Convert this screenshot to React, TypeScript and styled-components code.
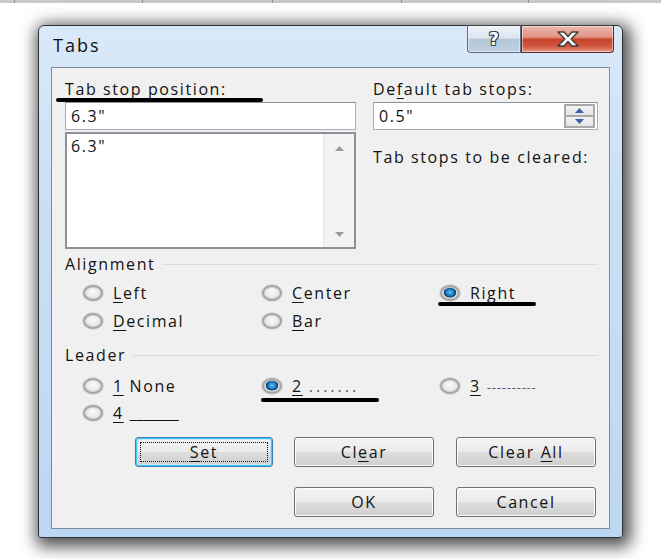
import React from "react";
import styled, { createGlobalStyle } from "styled-components";

const GlobalStyle = createGlobalStyle`
  html, body { margin: 0; padding: 0; background: #ffffff; }
  body { font-family: "Open Sans", "Noto Sans", "DejaVu Sans", sans-serif; color: #121212; }
  * { box-sizing: border-box; }
`;

const Page = styled.div`
  width: 661px;
  height: 559px;
  overflow: hidden;
  display: flex;
  flex-direction: column;
  background: #ffffff;
`;

const TopStrip = styled.div`
  height: 3px;
  display: flex;
  background: #c9c9cd;
`;

const StripSeg = styled.div<{ $w: number }>`
  width: ${(p) => p.$w}px;
  height: 100%;
  border-right: 1px solid #8d8d92;
`;

const Stage = styled.div`
  flex: 1;
  padding: 22px 0 0 38px;
`;

const Window = styled.div`
  position: relative;
  width: 585px;
  height: 513px;
  border: 1px solid #2c3035;
  border-radius: 6px 6px 3px 3px;
  background: linear-gradient(180deg, #d9e9f9 0%, #cadff5 35%, #bcd7f3 100%);
  box-shadow: 3px 4px 16px 5px rgba(0, 0, 0, 0.68);
  display: flex;
  flex-direction: column;
`;

const TitleBar = styled.div`
  height: 41px;
  display: flex;
  align-items: flex-start;
  padding-left: 14px;
`;

const Title = styled.div`
  margin-top: 7px;
  font-size: 18px;
  line-height: 24px;
  letter-spacing: 2px;
  color: #111;
`;

const Controls = styled.div`
  margin-left: auto;
  margin-right: 8px;
  margin-top: -1px;
  display: flex;
  height: 28px;
`;

const CapButton = styled.div<{ $kind: "help" | "close" }>`
  height: 28px;
  width: ${(p) => (p.$kind === "help" ? 54 : 93)}px;
  border: 1px solid ${(p) => (p.$kind === "help" ? "#5f6e80" : "#5a2a24")};
  border-top-color: #3a3f45;
  border-radius: ${(p) => (p.$kind === "help" ? "0 0 0 4px" : "0 0 4px 0")};
  background: ${(p) =>
    p.$kind === "help"
      ? "linear-gradient(180deg, #eef3f8 0%, #dce5ee 45%, #b4c6d9 52%, #bfd0e2 100%)"
      : "linear-gradient(180deg, #edb8ad 0%, #df9383 42%, #c8432b 52%, #d0563f 78%, #e49a86 100%)"};
  box-shadow: inset 0 0 0 1px rgba(255, 255, 255, 0.45);
  display: flex;
  align-items: center;
  justify-content: center;
`;

const HelpGlyph = styled.span`
  font-family: "DejaVu Sans", sans-serif;
  font-weight: bold;
  font-size: 17px;
  color: #ffffff;
  text-shadow: -1px 0 #3d4550, 1px 0 #3d4550, 0 -1px #3d4550, 0 1px #3d4550,
    1px 1px #3d4550, -1px -1px #3d4550, 1px -1px #3d4550, -1px 1px #3d4550;
  line-height: 1;
`;

const Client = styled.div`
  margin: 0 12px;
  height: 462px;
  border: 1px solid #7f8b98;
  background: #f0f0f0;
  padding: 9px 11px 0 13px;
  display: flex;
  flex-direction: column;
  font-size: 16px;
  letter-spacing: 1.6px;
`;

const TopGrid = styled.div`
  display: grid;
  grid-template-columns: 291px 225px;
  column-gap: 17px;
`;

const Column = styled.div`
  display: flex;
  flex-direction: column;
`;

const Label = styled.div<{ $mt?: number }>`
  height: 24px;
  line-height: 24px;
  margin-top: ${(p) => p.$mt ?? 0}px;
  white-space: nowrap;
`;

const TextBox = styled.div`
  margin-top: 1px;
  height: 28px;
  border: 1px solid #abadb3;
  border-top-color: #8e9298;
  background: #ffffff;
  display: flex;
  align-items: center;
  padding-left: 5px;
  position: relative;
`;

const ListBox = styled.div`
  margin-top: 2px;
  height: 117px;
  border: 2px solid #8c9097;
  background: #ffffff;
  display: flex;
`;

const ListItems = styled.div`
  flex: 1;
  padding: 1px 0 0 4px;
  line-height: 22px;
`;

const ScrollTrack = styled.div`
  width: 31px;
  background: #f3f3f3;
  border-left: 1px solid #e6e6e6;
  display: flex;
  flex-direction: column;
  justify-content: space-between;
  align-items: center;
  padding: 12px 0 10px;
`;

const Spinner = styled.div`
  margin-left: auto;
  margin-right: 2px;
  width: 31px;
  height: 24px;
  border: 2px solid #a9a9a9;
  display: flex;
  flex-direction: column;
  gap: 2px;
  background: #a9a9a9;
`;

const SpinBtn = styled.div`
  flex: 1;
  background: linear-gradient(180deg, #f2f2f2 0%, #e4e4e4 100%);
  display: flex;
  align-items: center;
  justify-content: center;
`;

const GroupHeader = styled.div<{ $mt: number }>`
  margin-top: ${(p) => p.$mt}px;
  height: 24px;
  display: flex;
  align-items: center;
  gap: 7px;
  &::after {
    content: "";
    flex: 1;
    height: 1px;
    background: #d3dde6;
  }
`;

const RadioGrid = styled.div<{ $mt: number }>`
  margin-top: ${(p) => p.$mt}px;
  padding-left: 18px;
  display: grid;
  grid-template-columns: 179px 178px 160px;
`;

const RadioItem = styled.div<{ $h: number }>`
  height: ${(p) => p.$h}px;
  display: flex;
  align-items: center;
  gap: 10px;
  white-space: nowrap;
`;

const RadioDot = styled.span<{ $on?: boolean }>`
  width: 20px;
  height: 16px;
  border-radius: 50%;
  border: 2px solid #a3a5a7;
  flex-shrink: 0;
  background: ${(p) =>
    p.$on
      ? "radial-gradient(ellipse at 50% 45%, #62c4f6 0%, #1f7fc4 32%, #0c3e6e 52%, #d4d4d4 58%, #f4f4f4 100%)"
      : "radial-gradient(ellipse at 50% 40%, #fafafa 0%, #ececec 50%, #d2d2d2 100%)"};
  box-shadow: inset 0 0 0 1px #d6d7d8, 0 0 0 1px #d8d8d8;
`;

const Leader = styled.span<{ $kind: "dots" | "dash" | "line" }>`
  margin-left: 6px;
  color: ${(p) => (p.$kind === "line" ? "#111" : "#4c5a7a")};
  letter-spacing: ${(p) => (p.$kind === "dots" ? "3px" : p.$kind === "dash" ? "0.8px" : "0px")};
  font-size: ${(p) => (p.$kind === "dash" ? "13px" : "16px")};
`;

const ButtonRow = styled.div<{ $mt: number }>`
  margin-top: ${(p) => p.$mt}px;
  display: flex;
  justify-content: flex-end;
  padding-right: 2px;
`;

const Btn = styled.div<{ $w: number; $gap?: number; $default?: boolean }>`
  width: ${(p) => p.$w}px;
  height: 30px;
  margin-left: ${(p) => p.$gap ?? 0}px;
  border: 1px solid ${(p) => (p.$default ? "#3c7fb1" : "#707070")};
  border-radius: 3px;
  background: linear-gradient(180deg, #f3f3f3 0%, #ebebeb 48%, #dddddd 52%, #cfcfcf 100%);
  box-shadow: ${(p) =>
    p.$default ? "inset 0 0 0 1px #48c8f4, inset 0 0 0 2px #bfe6f6" : "inset 0 0 0 1px #fcfcfc"};
  display: flex;
  align-items: center;
  justify-content: center;
  position: relative;
`;

const FocusRing = styled.span`
  position: absolute;
  inset: 4px;
  border: 1px dotted #111;
`;

const Mark = styled.div<{ $l: number; $t: number; $w: number }>`
  position: absolute;
  left: ${(p) => p.$l}px;
  top: ${(p) => p.$t}px;
  width: ${(p) => p.$w}px;
  height: 4px;
  border-radius: 2px;
  background: #000;
`;

const U = styled.span`
  text-decoration: underline;
  text-underline-offset: 3px;
  text-decoration-thickness: 1px;
`;

const Tri = ({ up, color }: { up: boolean; color: string }) => (
  <svg width="9" height="5" viewBox="0 0 9 5">
    <path d={up ? "M0 5 L4.5 0 L9 5 Z" : "M0 0 L4.5 5 L9 0 Z"} fill={color} />
  </svg>
);

const CloseX = () => (
  <svg width="24" height="16" viewBox="0 0 24 16">
    <path
      d="M2 1 H8 L12 5.5 L16 1 H22 L15 8 L22 15 H16 L12 10.5 L8 15 H2 L9 8 Z"
      fill="#ffffff"
      stroke="#3b3b3b"
      strokeWidth="1.3"
      strokeLinejoin="round"
    />
  </svg>
);

export default function App() {
  return (
    <Page>
      <GlobalStyle />
      <TopStrip>
        <StripSeg $w={15} />
        <StripSeg $w={128} />
        <StripSeg $w={130} />
        <StripSeg $w={129} />
        <StripSeg $w={127} />
      </TopStrip>
      <Stage>
        <Window>
          <TitleBar>
            <Title>Tabs</Title>
            <Controls>
              <CapButton $kind="help">
                <HelpGlyph>?</HelpGlyph>
              </CapButton>
              <CapButton $kind="close">
                <CloseX />
              </CapButton>
            </Controls>
          </TitleBar>
          <Client>
            <TopGrid>
              <Column>
                <Label>
                  <U>T</U>ab stop position:
                </Label>
                <TextBox>6.3"</TextBox>
                <ListBox>
                  <ListItems>6.3"</ListItems>
                  <ScrollTrack>
                    <Tri up color="#9a9a9a" />
                    <Tri up={false} color="#9a9a9a" />
                  </ScrollTrack>
                </ListBox>
              </Column>
              <Column>
                <Label>
                  De<U>f</U>ault tab stops:
                </Label>
                <TextBox>
                  0.5"
                  <Spinner>
                    <SpinBtn>
                      <Tri up color="#3f5fa6" />
                    </SpinBtn>
                    <SpinBtn>
                      <Tri up={false} color="#3f5fa6" />
                    </SpinBtn>
                  </Spinner>
                </TextBox>
                <Label $mt={15}>Tab stops to be cleared:</Label>
              </Column>
            </TopGrid>

            <GroupHeader $mt={3}>Alignment</GroupHeader>
            <RadioGrid $mt={3}>
              <RadioItem $h={28}>
                <RadioDot />
                <span>
                  <U>L</U>eft
                </span>
              </RadioItem>
              <RadioItem $h={28}>
                <RadioDot />
                <span>
                  <U>C</U>enter
                </span>
              </RadioItem>
              <RadioItem $h={28}>
                <RadioDot $on />
                <span>
                  <U>R</U>ight
                </span>
              </RadioItem>
              <RadioItem $h={28}>
                <RadioDot />
                <span>
                  <U>D</U>ecimal
                </span>
              </RadioItem>
              <RadioItem $h={28}>
                <RadioDot />
                <span>
                  <U>B</U>ar
                </span>
              </RadioItem>
            </RadioGrid>

            <GroupHeader $mt={8}>Leader</GroupHeader>
            <RadioGrid $mt={5}>
              <RadioItem $h={27}>
                <RadioDot />
                <span>
                  <U>1</U> None
                </span>
              </RadioItem>
              <RadioItem $h={27}>
                <RadioDot $on />
                <span>
                  <U>2</U>
                  <Leader $kind="dots">.......</Leader>
                </span>
              </RadioItem>
              <RadioItem $h={27}>
                <RadioDot />
                <span>
                  <U>3</U>
                  <Leader $kind="dash">----------</Leader>
                </span>
              </RadioItem>
              <RadioItem $h={27}>
                <RadioDot />
                <span>
                  <U>4</U>
                  <Leader $kind="line">_______</Leader>
                </span>
              </RadioItem>
            </RadioGrid>

            <ButtonRow $mt={11}>
              <Btn $w={138} $default>
                <FocusRing />
                <span>
                  <U>S</U>et
                </span>
              </Btn>
              <Btn $w={140} $gap={21}>
                <span>
                  Cl<U>e</U>ar
                </span>
              </Btn>
              <Btn $w={140} $gap={22}>
                <span>
                  Clear <U>A</U>ll
                </span>
              </Btn>
            </ButtonRow>
            <ButtonRow $mt={20}>
              <Btn $w={140}>OK</Btn>
              <Btn $w={140} $gap={22}>
                Cancel
              </Btn>
            </ButtonRow>
          </Client>

          <Mark $l={17} $t={72} $w={207} />
          <Mark $l={399} $t={276} $w={98} />
          <Mark $l={222} $t={372} $w={118} />
        </Window>
      </Stage>
    </Page>
  );
}
